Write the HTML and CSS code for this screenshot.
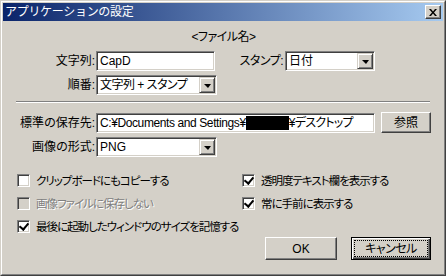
FILE: index.html
```html
<!DOCTYPE html>
<html lang="ja">
<head>
    <meta charset="UTF-8">
    <title>アプリケーションの設定</title>
    <link rel="stylesheet" href="styles.css">
</head>
<body>
    <div class="window">
        <div class="window-inner">
            <div class="titlebar">
                <span class="title">アプリケーションの設定</span>
                <span class="close">
                    <svg width="8" height="7" viewBox="0 0 8 7"><path d="M0 0h2l2 2.5L6 0h2L5 3.5 8 7H6L4 4.5 2 7H0l3-3.5z" fill="#000"/></svg>
                </span>
            </div>
            <div class="content">
                <div class="heading">&lt;ファイル名&gt;</div>

                <div class="row">
                    <label class="label">文字列:</label>
                    <div class="field name-field">CapD</div>
                    <label class="label stamp-label">スタンプ:</label>
                    <div class="field select stamp-select">日付<span class="drop"><i></i></span></div>
                </div>
                <div class="row row-order">
                    <label class="label">順番:</label>
                    <div class="field select order-select">文字列 + スタンプ<span class="drop"><i></i></span></div>
                </div>

                <div class="separator"></div>

                <div class="row row-path">
                    <label class="label">標準の保存先:</label>
                    <div class="field path-field"><span class="latin">C:¥Documents and Settings¥</span><span class="redact"></span><span class="latin">¥</span>デスクトップ</div>
                    <button class="button browse">参照</button>
                </div>
                <div class="row row-format">
                    <label class="label">画像の形式:</label>
                    <div class="field select format-select">PNG<span class="drop"><i></i></span></div>
                </div>

                <div class="options">
                    <div class="option"><span class="box"></span>クリップボードにもコピーする</div>
                    <div class="option"><span class="box checked"></span>透明度テキスト欄を表示する</div>
                    <div class="option disabled"><span class="box"></span>画像ファイルに保存しない</div>
                    <div class="option"><span class="box checked"></span>常に手前に表示する</div>
                    <div class="option wide"><span class="box checked"></span>最後に起動したウィンドウのサイズを記憶する</div>
                </div>

                <div class="actions">
                    <button class="button ok">OK</button>
                    <button class="button cancel"><span class="focus">キャンセル</span></button>
                </div>
            </div>
        </div>
    </div>
</body>
</html>
```

FILE: styles.css
```css
body {
    margin: 0;
    background: #d4d0c8;
}

.window {
    width: 446px;
    height: 276px;
    box-sizing: border-box;
    border: 1px solid;
    border-color: #d4d0c8 #404040 #404040 #d4d0c8;
    background: #d4d0c8;
    font-family: "Liberation Sans", "Noto Sans CJK JP", sans-serif;
    font-size: 12px;
    line-height: 14px;
    color: #000;
}

.window-inner {
    height: 100%;
    box-sizing: border-box;
    border: 1px solid;
    border-color: #fff #808080 #808080 #fff;
    padding: 1px;
}

.titlebar {
    height: 18px;
    display: flex;
    align-items: center;
    justify-content: space-between;
    padding: 0 2px 0 2px;
    background: linear-gradient(to right, #0a246a, #a6caf0);
    color: #fff;
}

.title {
    letter-spacing: -0.3px;
}

.close {
    width: 16px;
    height: 14px;
    box-sizing: border-box;
    display: flex;
    align-items: center;
    justify-content: center;
    background: #d4d0c8;
    border: 1px solid;
    border-color: #fff #404040 #404040 #fff;
    box-shadow: inset -1px -1px #808080;
}

.content {
    padding: 0 12px 0 13px;
    font-feature-settings: "palt";
}

.heading {
    text-align: center;
    margin-top: 9px;
    letter-spacing: -0.5px;
}

.row {
    display: flex;
    align-items: center;
    margin-top: 7px;
}

.row-order {
    margin-top: 4px;
}

.row-path {
    margin-top: 9px;
}

.row-format {
    margin-top: 4px;
}

.label {
    width: 79px;
    padding-right: 1px;
    text-align: right;
    flex: none;
}

.stamp-label {
    width: 68px;
    padding-right: 2px;
    letter-spacing: -0.5px;
}

.field {
    position: relative;
    height: 20px;
    box-sizing: border-box;
    display: flex;
    align-items: center;
    padding-left: 3px;
    background: #fff;
    border: 1px solid;
    border-color: #808080 #fff #fff #808080;
    box-shadow: inset 1px 1px #404040, inset -1px -1px #d4d0c8;
    white-space: nowrap;
    overflow: hidden;
}

.name-field {
    width: 119px;
}

.stamp-select {
    width: 90px;
}

.order-select,
.format-select {
    width: 121px;
}

.order-select {
    letter-spacing: -0.5px;
}

.path-field {
    width: 279px;
    letter-spacing: -0.8px;
}

.path-field .latin {
    letter-spacing: -0.4px;
}

.redact {
    display: inline-block;
    width: 43px;
    height: 14px;
    background: #000;
}

.drop {
    position: absolute;
    right: 1px;
    top: 1px;
    width: 16px;
    height: 16px;
    box-sizing: border-box;
    display: flex;
    align-items: center;
    justify-content: center;
    background: #d4d0c8;
    border: 1px solid;
    border-color: #d4d0c8 #404040 #404040 #d4d0c8;
    box-shadow: inset 1px 1px #fff, inset -1px -1px #808080;
}

.drop i {
    width: 0;
    height: 0;
    border-left: 4px solid transparent;
    border-right: 3px solid transparent;
    border-top: 4px solid #000;
    margin-top: 1px;
}

.separator {
    margin-top: 6px;
    height: 0;
    border-top: 1px solid #808080;
    border-bottom: 1px solid #fff;
    margin-right: 1px;
}

.button {
    height: 21px;
    box-sizing: border-box;
    padding: 0;
    font: inherit;
    color: #000;
    background: #d4d0c8;
    border: 1px solid;
    border-color: #fff #404040 #404040 #fff;
    box-shadow: inset -1px -1px #808080;
}

.browse {
    width: 50px;
    margin-left: 6px;
}

.options {
    display: grid;
    grid-template-columns: 225px 1fr;
    grid-auto-rows: 23px;
    margin-top: 12px;
    padding-left: 1px;
    font-size: 11.5px;
    letter-spacing: -1px;
}

.option {
    display: flex;
    align-items: center;
}

.option.wide {
    grid-column: span 2;
}

.box {
    width: 13px;
    height: 13px;
    box-sizing: border-box;
    margin-right: 6px;
    background: #fff;
    border: 1px solid;
    border-color: #808080 #fff #fff #808080;
    box-shadow: inset 1px 1px #404040, inset -1px -1px #d4d0c8;
    display: flex;
    align-items: center;
    justify-content: center;
}

.box.checked::before {
    content: "";
    width: 4px;
    height: 7px;
    margin-top: -3px;
    border: solid #000;
    border-width: 0 2px 2px 0;
    transform: rotate(40deg);
}

.option.disabled {
    color: #808080;
    text-shadow: 1px 1px #fff;
}

.option.disabled .box {
    background: #d4d0c8;
}

.actions {
    display: flex;
    justify-content: flex-end;
    gap: 14px;
    margin-top: -1px;
}

.ok {
    width: 72px;
    height: 23px;
}

.cancel {
    width: 80px;
    height: 23px;
    border: 1px solid #000;
    box-shadow: inset 1px 1px #fff, inset -1px -1px #404040, inset -2px -2px #808080;
    padding: 3px;
    letter-spacing: -0.5px;
}

.cancel .focus {
    display: flex;
    align-items: center;
    justify-content: center;
    height: 100%;
    outline: 1px dotted #000;
}
```
